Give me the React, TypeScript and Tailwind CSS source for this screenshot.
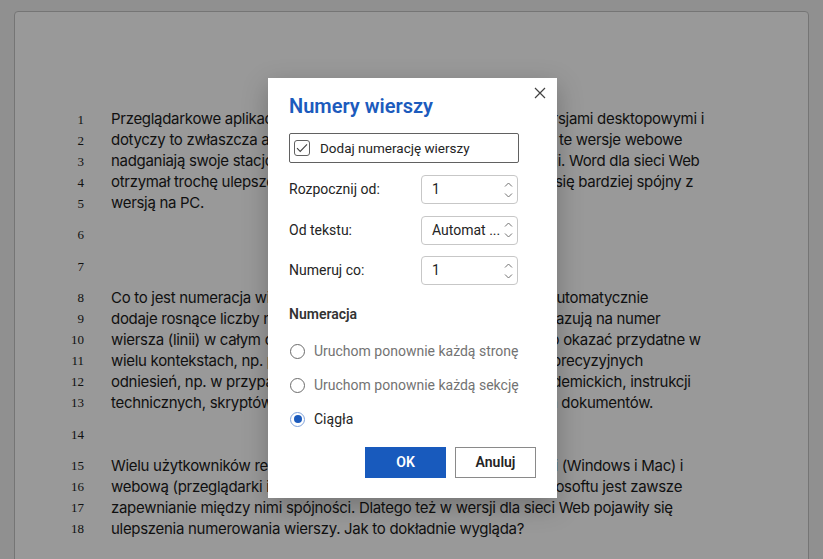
import { useState } from 'react'

const paragraphs: string[][] = [
  [
    'Przeglądarkowe aplikacje pakietu Office latami przegrywały z wersjami desktopowymi i',
    'dotyczy to zwłaszcza aplikacji Worda. Na szczęście z roku na rok te wersje webowe',
    'nadganiają swoje stacjonarne odpowiedniki pod względem funkcji. Word dla sieci Web',
    'otrzymał trochę ulepszeń w numeracji wierszy, dzięki czemu stał się bardziej spójny z',
    'wersją na PC.',
  ],
  [''],
  [''],
  [
    'Co to jest numeracja wierszy? To funkcja edytora tekstów, która automatycznie',
    'dodaje rosnące liczby na marginesie tekstu. Te kolejne liczby wskazują na numer',
    'wiersza (linii) w całym dokumencie lub w danej sekcji. Może się to okazać przydatne w',
    'wielu kontekstach, np. podczas wspólnej edycji tekstu, recenzji i precyzyjnych',
    'odniesień, np. w przypadku dokumentów prawnych, tekstów akademickich, instrukcji',
    'technicznych, skryptów filmowych czy też innych szczegółowych dokumentów.',
  ],
  [''],
  [
    'Wielu użytkowników regularnie pracuje z wersjami desktopowymi (Windows i Mac) i',
    'webową (przeglądarki internetowe), dlatego głównym celem Microsoftu jest zawsze',
    'zapewnianie między nimi spójności. Dlatego też w wersji dla sieci Web pojawiły się',
    'ulepszenia numerowania wierszy. Jak to dokładnie wygląda?',
  ],
]

function Spinner() {
  return (
    <div className="flex flex-col items-center gap-[6px] text-[#707070]">
      <svg width="9" height="5" viewBox="0 0 9 5" fill="none">
        <path d="M1 4.5 L4.5 1 L8 4.5" stroke="currentColor" strokeWidth="1" />
      </svg>
      <svg width="9" height="5" viewBox="0 0 9 5" fill="none">
        <path d="M1 0.5 L4.5 4 L8 0.5" stroke="currentColor" strokeWidth="1" />
      </svg>
    </div>
  )
}

function NumberField({ label, value }: { label: string; value: string }) {
  return (
    <div className="flex items-center">
      <span className="w-[132px] text-[14px] text-[#242424]">{label}</span>
      <div className="flex h-[29px] w-[97px] items-center justify-between rounded-[4px] border border-[#c7c7c7] pl-[10px] pr-[4px]">
        <span className="whitespace-nowrap text-[14px] text-[#242424]">{value}</span>
        <Spinner />
      </div>
    </div>
  )
}

const radios = ['Uruchom ponownie każdą stronę', 'Uruchom ponownie każdą sekcję', 'Ciągła']

export default function App() {
  const [selected, setSelected] = useState(2)
  let lineNo = 0

  return (
    <div className="relative h-[559px] w-[823px] overflow-hidden bg-[#f0f0f0]">
      <div
        className="mx-[14px] mt-[11px] h-[600px] rounded-t-[4px] border border-[#c4c4c4] bg-white pt-[97px] text-[#1b1b1b]"
        style={{ fontFamily: 'Inter, "Noto Sans", sans-serif' }}
      >
        {paragraphs.map((lines, p) => (
          <div key={p} className="mb-[10.5px]">
            {lines.map((line) => {
              lineNo += 1
              return (
                <div key={lineNo} className="flex h-[21px] items-center">
                  <span
                    className="w-[71px] pr-[2px] text-right text-[13px]"
                    style={{ fontFamily: '"Liberation Serif", serif' }}
                  >
                    {lineNo}
                  </span>
                  <span className="ml-[25px] whitespace-nowrap text-[15px] tracking-[-0.3px]">{line}</span>
                </div>
              )
            })}
          </div>
        ))}
      </div>

      <div className="absolute inset-0 bg-black/40" />

      <div
        className="absolute left-[268px] top-[78px] flex h-[420px] w-[289px] flex-col bg-white px-[21px] pt-[15px] shadow-[0_8px_24px_rgba(0,0,0,0.25)]"
        style={{ fontFamily: 'Roboto, "Noto Sans", sans-serif' }}
      >
        <button className="absolute right-[5px] top-[3px] flex h-[24px] w-[24px] items-center justify-center text-[#424242]">
          <svg width="12" height="12" viewBox="0 0 12 12" fill="none">
            <path d="M1 1 L11 11 M11 1 L1 11" stroke="currentColor" strokeWidth="1.2" />
          </svg>
        </button>

        <h2 className="text-[20px] font-semibold leading-[26px] text-[#1c5bbd]">Numery wierszy</h2>

        <label className="mt-[14px] flex h-[30px] w-[230px] items-center gap-[10px] rounded-[2px] border border-[#616161] px-[4px]">
          <span className="flex h-[16px] w-[16px] items-center justify-center rounded-[3px] border border-[#616161]">
            <svg width="12" height="10" viewBox="0 0 12 10" fill="none">
              <path d="M1 5.2 L4.2 8.4 L11 1.4" stroke="#424242" strokeWidth="1.1" />
            </svg>
          </span>
          <span className="text-[13.5px] text-[#242424]">Dodaj numerację wierszy</span>
        </label>

        <div className="mt-[12px] flex flex-col gap-[11.5px]">
          <NumberField label="Rozpocznij od:" value="1" />
          <NumberField label="Od tekstu:" value="Automat ..." />
          <NumberField label="Numeruj co:" value="1" />
        </div>

        <div className="mt-[19px] text-[14px] font-semibold text-[#333333]">Numeracja</div>

        <div className="mt-[16px] flex flex-col gap-[14px]">
          {radios.map((r, i) => (
            <button
              key={r}
              onClick={() => setSelected(i)}
              className="flex h-[20px] items-center gap-[9px] text-left"
            >
              <span
                className={
                  selected === i
                    ? 'ml-[1px] flex h-[15px] w-[15px] items-center justify-center rounded-full border border-[#7fa2db]'
                    : 'ml-[1px] flex h-[15px] w-[15px] items-center justify-center rounded-full border border-[#6b6b6b]'
                }
              >
                {selected === i && <span className="h-[8px] w-[8px] rounded-full bg-[#1c5bbd]" />}
              </span>
              <span className={i === 2 ? 'text-[14px] text-[#242424]' : 'text-[14px] text-[#737373]'}>{r}</span>
            </button>
          ))}
        </div>

        <div className="mt-auto mb-[20px] flex justify-end gap-[9px]">
          <button className="h-[31px] w-[81px] bg-[#185abd] text-[14px] font-semibold text-white">OK</button>
          <button className="h-[31px] w-[81px] border border-[#8a8a8a] bg-white text-[14px] font-semibold text-[#242424]">
            Anuluj
          </button>
        </div>
      </div>
    </div>
  )
}
